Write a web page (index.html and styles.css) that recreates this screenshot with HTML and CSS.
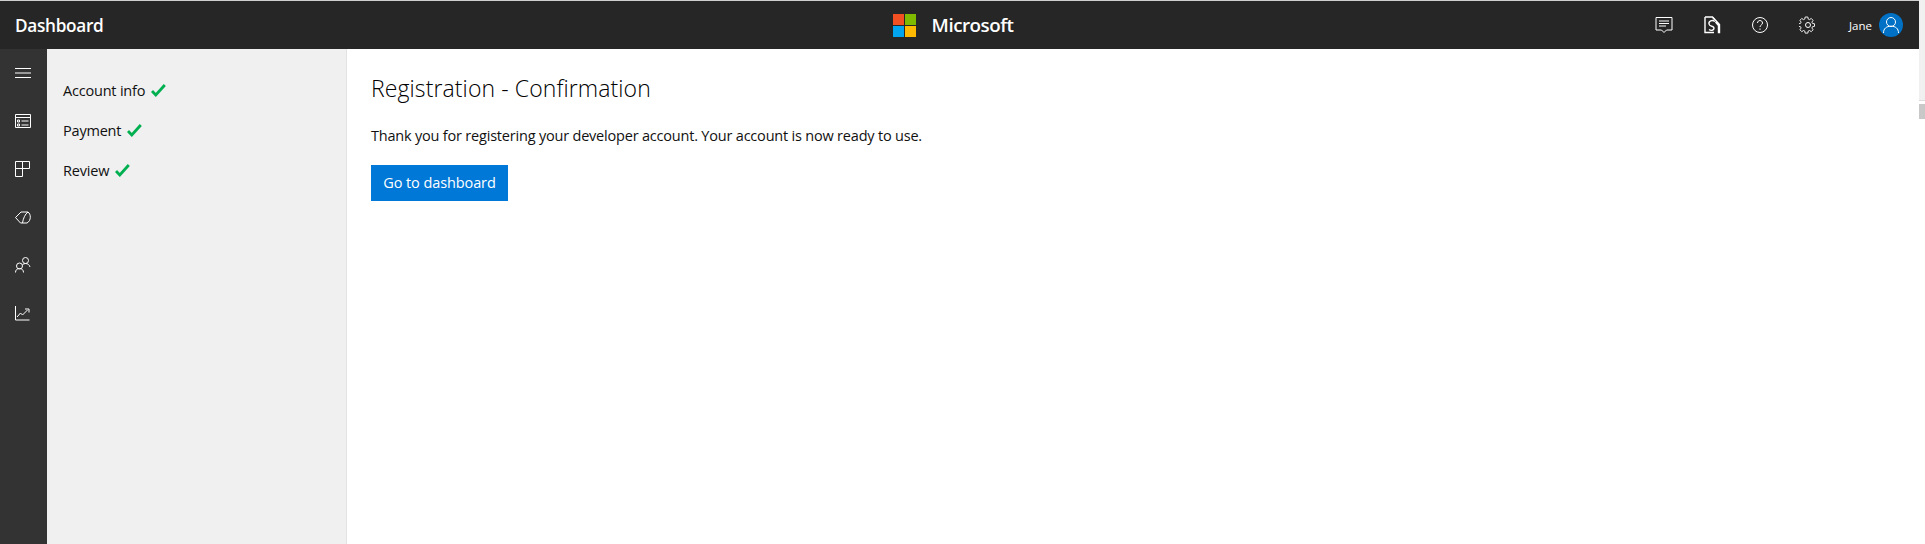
FILE: index.html
```html
<!DOCTYPE html>
<html>
<head>
	<meta charset="utf-8">
	<meta name="viewport" content="width=device-width, initial-scale=1">
	<title>Dashboard</title>
	<link rel="stylesheet" href="styles.css">
</head>
<body>
	<div class="page">
		<div class="app">
			<header class="topbar">
				<div class="brand">Dashboard</div>
				<div class="logo">
					<svg width="23" height="23" viewBox="0 0 23 23">
						<rect x="0" y="0" width="11" height="11" fill="#f25022"/>
						<rect x="12" y="0" width="11" height="11" fill="#7fba00"/>
						<rect x="0" y="12" width="11" height="11" fill="#00a4ef"/>
						<rect x="12" y="12" width="11" height="11" fill="#ffb900"/>
					</svg>
					<span class="logo-text">Microsoft</span>
				</div>
				<div class="tools">
					<div class="tool">
						<svg class="icon" width="18" height="18" viewBox="0 0 18 18">
							<path d="M1 1.500h16v12.500h-5.500l-2.500 2.500-2.500-2.500h-5.500z"/>
							<path d="M4 5h10M4 7.500h10M4 10h7"/>
						</svg>
					</div>
					<div class="tool">
						<svg class="icon icon-doc" width="18" height="18" viewBox="0 0 18 18">
							<path d="M2 1h7.500l1.500 2v.5M2 1v15.500h9M2 1v15.500"/>
							<path d="M10 1.500l6.500 7v8h-1v-7l-3-3.500"/>
							<path d="M12 5.500c-3-2-6.500-.5-6 2.500s5 1.500 5 4-3 3-5 1.500"/>
						</svg>
					</div>
					<div class="tool">
						<svg class="icon" width="18" height="18" viewBox="0 0 18 18">
							<circle cx="9" cy="9" r="7.500"/>
							<path d="M6.500 7c0-3.300 5-3.300 5 0 0 2-2.500 2-2.500 4"/>
							<path d="M9 12.500v1.300"/>
						</svg>
					</div>
					<div class="tool">
						<svg class="icon" width="18" height="18" viewBox="0 0 18 18">
							<circle cx="9" cy="9" r="2.500"/>
							<path d="M7.500 1h3l.4 2.300 1.400.6 2-1.300 2 2.100-1.300 2 .6 1.400 2.300.4v2.900l-2.300.4-.6 1.400 1.300 2-2 2.100-2-1.300-1.400.6-.4 2.300h-3l-.4-2.300-1.400-.6-2 1.300-2-2.100 1.300-2-.6-1.400-2.300-.4v-2.900l2.300-.4.6-1.400-1.300-2 2-2.100 2 1.300 1.400-.6z" transform="translate(-.6 .1) scale(.9)"/>
						</svg>
					</div>
					<span class="user-name">Jane</span>
					<div class="avatar">
						<svg class="icon" width="18" height="18" viewBox="0 0 18 18">
							<circle cx="9" cy="6" r="4.500"/>
							<path d="M1.500 17c0-4.500 3-6.800 7.500-6.800s7.500 2.300 7.500 6.800"/>
						</svg>
					</div>
				</div>
			</header>
			<div class="body">
				<nav class="rail">
					<div class="rail-item">
						<svg class="icon" width="16" height="16" viewBox="0 0 16 16">
							<path d="M0 3.500h16M0 8h16M0 12.500h16"/>
						</svg>
					</div>
					<div class="rail-item">
						<svg class="icon" width="16" height="16" viewBox="0 0 16 16">
							<path d="M.5 1.500h15v13h-15zM.5 4.500h15"/>
							<path d="M2.500 7h2v2h-2zM2.500 11h2v2h-2zM6.500 8h7M6.500 12h7"/>
						</svg>
					</div>
					<div class="rail-item">
						<svg class="icon" width="16" height="16" viewBox="0 0 16 16">
							<path d="M.5.500h7v7h-7zM.5 7.500h7v8h-7zM7.500.500h7v7h-7z"/>
						</svg>
					</div>
					<div class="rail-item">
						<svg class="icon" width="16" height="16" viewBox="0 0 16 16">
							<path d="M.5 8.500l5.500-5.500h7c3 2 3.500 8.500-1 11h-6.500z"/>
							<path d="M13 3c-3 2-5 7-5.500 11"/>
						</svg>
					</div>
					<div class="rail-item">
						<svg class="icon" width="16" height="16" viewBox="0 0 16 16">
							<circle cx="10.500" cy="3.500" r="3"/>
							<circle cx="4.500" cy="9" r="3"/>
							<path d="M.5 15.500c0-2.500 1.500-4 4-4s4 1.500 4 4M7.500 7.500c1-.5 2-1 3-1 2.500 0 4 1.500 4.500 3.500"/>
						</svg>
					</div>
					<div class="rail-item">
						<svg class="icon" width="16" height="16" viewBox="0 0 16 16">
							<path d="M.5 1v14h14"/>
							<path d="M2 12l3.500-4 2 2 5-5M10 4h4v3.500"/>
						</svg>
					</div>
				</nav>
				<aside class="steps">
					<div class="step">Account info
						<svg class="check" width="15" height="13" viewBox="0 0 15 13"><path d="M1 7l3.800 4 9-10"/></svg>
					</div>
					<div class="step">Payment
						<svg class="check" width="15" height="13" viewBox="0 0 15 13"><path d="M1 7l3.800 4 9-10"/></svg>
					</div>
					<div class="step">Review
						<svg class="check" width="15" height="13" viewBox="0 0 15 13"><path d="M1 7l3.800 4 9-10"/></svg>
					</div>
				</aside>
				<main class="content">
					<h1 class="title">Registration - Confirmation</h1>
					<p class="message">Thank you for registering your developer account. Your account is now ready to use.</p>
					<button class="btn">Go to dashboard</button>
				</main>
			</div>
		</div>
		<div class="scrollbar">
			<div class="track"></div>
			<div class="thumb"></div>
		</div>
	</div>
</body>
</html>
```

FILE: styles.css
```css
html, body {
	margin: 0;
	height: 100%;
	overflow: hidden;
	background: #fff;
}
body {
	font-family: "Open Sans", "Liberation Sans", sans-serif;
	color: #111;
}
.page {
	display: flex;
	height: 100%;
}
.app {
	flex: 1;
	display: flex;
	flex-direction: column;
	border-top: 1px solid #cfcfcf;
}
.scrollbar {
	width: 6px;
}
.track {
	height: 100px;
	background: #f0f0f0;
	border-bottom: 1px solid #dcdcdc;
}
.thumb {
	height: 15px;
	margin-top: 3px;
	background: #c8c8c8;
}

.icon {
	fill: none;
	stroke: #fff;
	stroke-width: 1;
	display: block;
}
.icon-doc {
	stroke-width: 1.4;
}

.topbar {
	height: 48px;
	background: #262626;
	color: #fff;
	display: grid;
	grid-template-columns: 1fr auto 1fr;
	align-items: center;
	flex: none;
}
.brand {
	padding-left: 15px;
	font-size: 17.2px;
	font-weight: 600;
	letter-spacing: -0.3px;
}
.logo {
	display: flex;
	align-items: center;
	gap: 16px;
	margin-right: 13px;
}
.logo-text {
	font-size: 18.8px;
	font-weight: 600;
	letter-spacing: -0.5px;
}
.tools {
	display: flex;
	align-items: center;
	justify-content: flex-end;
	padding-right: 16px;
}
.tool {
	width: 48px;
	display: flex;
	justify-content: center;
}
.user-name {
	margin-left: 17px;
	margin-right: 7px;
	font-size: 11.5px;
}
.avatar {
	width: 24px;
	height: 24px;
	border-radius: 50%;
	background: #0071c5;
	display: flex;
	align-items: center;
	justify-content: center;
}

.body {
	flex: 1;
	display: flex;
}
.rail {
	width: 47px;
	background: #333;
	flex: none;
}
.rail-item {
	height: 48px;
	padding-right: 1px;
	display: flex;
	align-items: center;
	justify-content: center;
}
.steps {
	width: 283px;
	padding: 21px 0 0 16px;
	background: #f0f0f0;
	border-right: 1px solid #e3e3e3;
	flex: none;
}
.step {
	height: 40px;
	display: flex;
	align-items: center;
	gap: 6px;
	font-size: 14.5px;
	letter-spacing: -0.2px;
}
.check {
	fill: none;
	stroke: #00b050;
	stroke-width: 2.8;
}

.content {
	flex: 1;
	padding: 22px 24px;
}
.title {
	margin: 0;
	color: #000;
	font-size: 23px;
	font-weight: 300;
	line-height: 34px;
	letter-spacing: 0.1px;
}
.message {
	margin: 21px 0 0;
	font-size: 14.5px;
	line-height: 20px;
	letter-spacing: -0.2px;
}
.btn {
	display: block;
	margin-top: 19px;
	width: 137px;
	height: 36px;
	padding: 0 0 2px;
	border: 0;
	background: #0078d7;
	color: #fff;
	font-family: inherit;
	font-size: 14.5px;
	letter-spacing: -0.1px;
}
```
